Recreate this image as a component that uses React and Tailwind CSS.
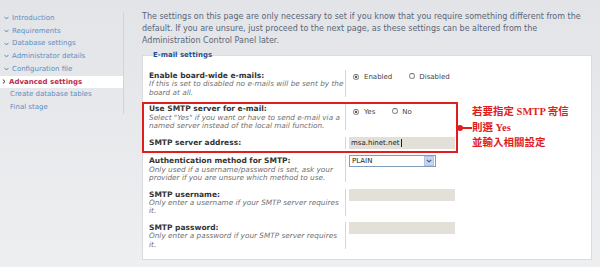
function Chev({ dir = "down", color = "#5b8ec4" }) {
  return dir === "down" ? (
    <svg width="5" height="4" viewBox="0 0 5 4" className="shrink-0">
      <path d="M0.5 0.8 L2.5 3 L4.5 0.8" fill="none" stroke={color} strokeWidth="1" />
    </svg>
  ) : (
    <svg width="4" height="5" viewBox="0 0 4 5" className="shrink-0">
      <path d="M0.8 0.5 L3 2.5 L0.8 4.5" fill="none" stroke={color} strokeWidth="1" />
    </svg>
  );
}

function Radio({ checked }) {
  return (
    <span className="inline-flex items-center justify-center w-[6px] h-[6px] rounded-full border border-[#8f8f8f] border-t-[#6a6a6a] bg-white shrink-0">
      {checked && <span className="block w-[2px] h-[2px] rounded-full bg-[#222]" />}
    </span>
  );
}

function Row({ label, lines = [], children }) {
  return (
    <div className="flex">
      <div className="w-[202px] shrink-0 pl-[6px] pt-[2px] whitespace-nowrap">
        <div className="text-[7.5px] leading-[8.3px] font-bold text-[#333]">{label}</div>
        {lines.map((l, i) => (
          <div key={i} className="text-[7.3px] leading-[8.3px] italic text-[#707070]">
            {l}
          </div>
        ))}
      </div>
      <div className="flex-1 border-l border-[#d6d6d6] pl-[3px]">{children}</div>
    </div>
  );
}

export default function App() {
  const done = ["Introduction", "Requirements", "Database settings", "Administrator details", "Configuration file"];
  return (
    <div className="relative flex w-[600px] h-[267px] overflow-hidden bg-gradient-to-b from-[#e2e4e7] to-[#edeff1] font-['DejaVu_Sans',sans-serif]">
      <aside className="w-[124px] shrink-0 pt-[12px]">
        <ul className="border-r border-[#d0d3d7] text-[7px] leading-[12.7px] text-[#5b8ec4] whitespace-nowrap">
          {done.map((t) => (
            <li key={t} className="flex items-center pl-[4px] gap-[3px]">
              <Chev />
              <span>{t}</span>
            </li>
          ))}
          <li className="flex items-center pl-[2px] gap-[3px] bg-white font-bold text-[#bd2a50]">
            <Chev dir="right" color="#333" />
            <span>Advanced settings</span>
          </li>
          <li className="pl-[10px]">Create database tables</li>
          <li className="pl-[10px]">Final stage</li>
        </ul>
      </aside>

      <main className="flex-1 pl-[18px] pr-[8px] pt-[11px]">
        <p className="text-[8px] leading-[12px] text-[#5a6577] whitespace-nowrap">
          The settings on this page are only necessary to set if you know that you require something different from the
          <br />
          default. If you are unsure, just proceed to the next page, as these settings can be altered from the
          <br />
          Administration Control Panel later.
        </p>
        <fieldset className="mt-[3px] bg-white border border-[#d9dbde] pb-[10px]">
          <legend className="ml-[10px] text-[7px] leading-[10px] font-bold text-[#1e4f8a]">E-mail settings</legend>
          <div className="pt-[10px] flex flex-col gap-[6.5px]">
            <Row
              label="Enable board-wide e-mails:"
              lines={["If this is set to disabled no e-mails will be sent by the", "board at all."]}
            >
              <div className="flex items-center pl-[4px] pt-[3px] text-[7px] leading-[8px] text-[#444]">
                <Radio checked />
                <span className="ml-[5px]">Enabled</span>
                <span className="ml-[17px]"><Radio /></span>
                <span className="ml-[4px]">Disabled</span>
              </div>
            </Row>
            <Row
              label="Use SMTP server for e-mail:"
              lines={['Select "Yes" if you want or have to send e-mail via a', "named server instead of the local mail function."]}
            >
              <div className="flex items-center pl-[4px] pt-[5px] text-[7px] leading-[8px] text-[#444]">
                <Radio checked />
                <span className="ml-[5px]">Yes</span>
                <span className="ml-[17px]"><Radio /></span>
                <span className="ml-[4px]">No</span>
              </div>
            </Row>
            <Row label="SMTP server address:">
              <div className="flex items-center w-[106px] h-[12px] bg-[#e3e0da] pl-[2px] text-[7px] text-[#222]">
                msa.hinet.net<span className="inline-block w-px h-[8px] bg-[#222] ml-px" />
              </div>
            </Row>
            <Row
              label="Authentication method for SMTP:"
              lines={["Only used if a username/password is set, ask your", "provider if you are unsure which method to use."]}
            >
              <div className="flex items-center w-[87px] h-[12px] border border-[#7f9db9] bg-white text-[7px] text-[#222]">
                <span className="flex-1 pl-[2px]">PLAIN</span>
                <span className="flex items-center justify-center w-[10px] h-[10px] bg-[#c4d5f6] border border-[#b0c4ec] mr-px">
                  <svg width="6" height="4" viewBox="0 0 6 4">
                    <path d="M0.8 0.8 L3 3 L5.2 0.8" fill="none" stroke="#4d6185" strokeWidth="1.2" />
                  </svg>
                </span>
              </div>
            </Row>
            <Row label="SMTP username:" lines={["Only enter a username if your SMTP server requires", "it."]}>
              <div className="w-[106px] h-[12px] bg-[#e3e0da]" />
            </Row>
            <Row label="SMTP password:" lines={["Only enter a password if your SMTP server requires", "it."]}>
              <div className="w-[106px] h-[12px] bg-[#e3e0da]" />
            </Row>
          </div>
        </fieldset>
      </main>

      {/* annotation overlay */}
      <div className="absolute left-[142px] top-[102px] w-[316px] h-[51px] border-2 border-[#e01e1e]" />
      <div className="absolute left-[457px] top-[127px] w-[15px] h-[2px] bg-[#e01e1e]" />
      <div className="absolute left-[457px] top-[125px] w-[6px] h-[6px] rounded-full bg-[#e01e1e]" />
      <div className="absolute left-[472px] top-[104px] text-[10.5px] leading-[15.5px] font-bold text-[#e01e1e] whitespace-nowrap font-['Liberation_Serif','Noto_Sans_CJK_TC',serif]">
        <div>若要指定 SMTP 寄信</div>
        <div>則選 Yes</div>
        <div>並輸入相關設定</div>
      </div>
    </div>
  );
}
